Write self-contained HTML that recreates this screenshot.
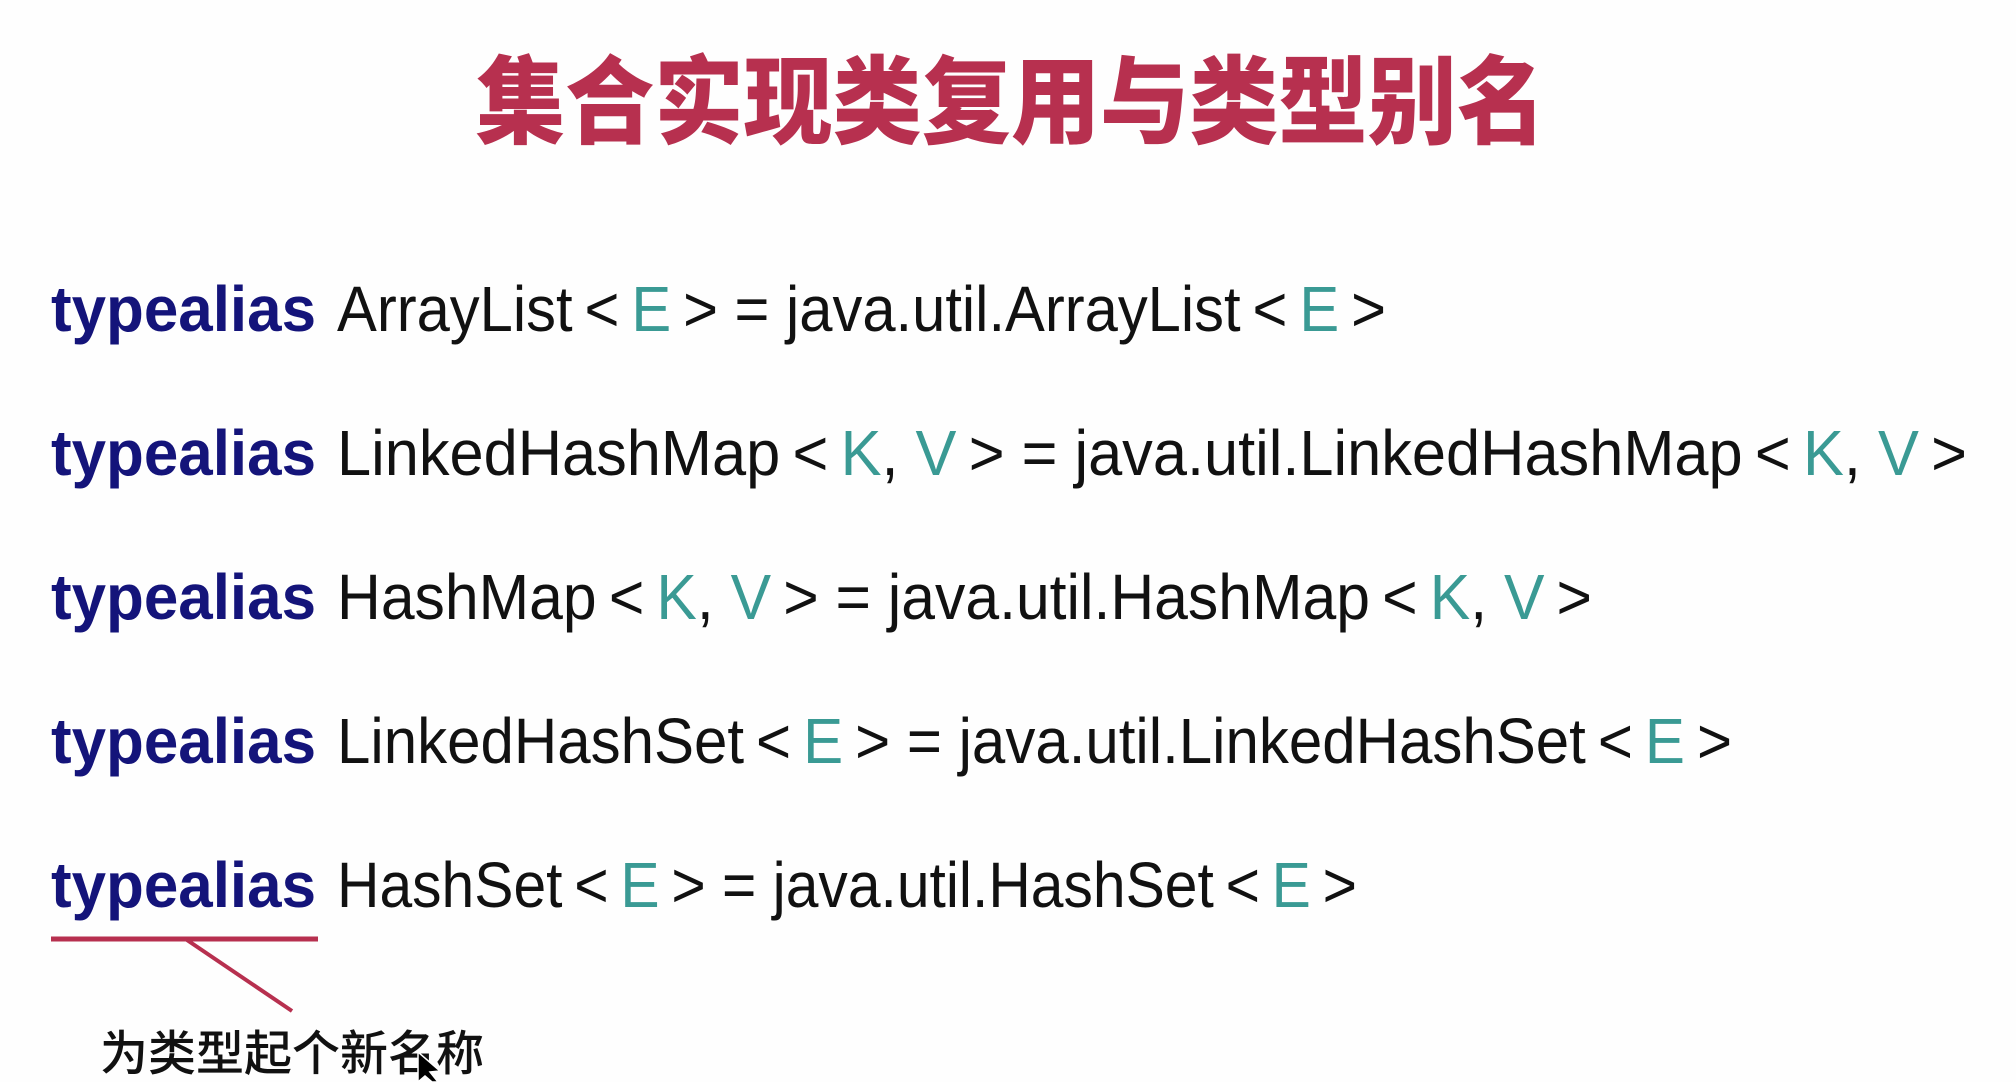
<!DOCTYPE html>
<html><head><meta charset="utf-8"><style>
html,body{margin:0;padding:0;background:#fff;}
svg{display:block}
</style></head><body>
<svg width="2016" height="1082" viewBox="0 0 2016 1082" xmlns="http://www.w3.org/2000/svg">
<rect width="2016" height="1082" fill="#fefefe"/>
<text x="476" y="136" textLength="1070" lengthAdjust="spacingAndGlyphs" font-family="'Noto Sans CJK SC', sans-serif" font-weight="900" font-size="96" fill="#b7304f">集合实现类复用与类型别名</text>
<g font-family="'Liberation Sans', sans-serif" font-size="64">
<g font-weight="bold" fill="#14147a">
<text x="51" y="331" textLength="265" lengthAdjust="spacingAndGlyphs">typealias</text>
<text x="51" y="475" textLength="265" lengthAdjust="spacingAndGlyphs">typealias</text>
<text x="51" y="619" textLength="265" lengthAdjust="spacingAndGlyphs">typealias</text>
<text x="51" y="763" textLength="265" lengthAdjust="spacingAndGlyphs">typealias</text>
<text x="51" y="907" textLength="265" lengthAdjust="spacingAndGlyphs">typealias</text>
</g>
<g fill="#111">
<text x="337" y="331" textLength="1049" lengthAdjust="spacingAndGlyphs">ArrayList&#8201;&lt;&#8201;<tspan fill="#3a9a94">E</tspan>&#8201;&gt; = java.util.ArrayList&#8201;&lt;&#8201;<tspan fill="#3a9a94">E</tspan>&#8201;&gt;</text>
<text x="337" y="475" textLength="1630" lengthAdjust="spacingAndGlyphs">LinkedHashMap&#8201;&lt;&#8201;<tspan fill="#3a9a94">K</tspan>, <tspan fill="#3a9a94">V</tspan>&#8201;&gt; = java.util.LinkedHashMap&#8201;&lt;&#8201;<tspan fill="#3a9a94">K</tspan>, <tspan fill="#3a9a94">V</tspan>&#8201;&gt;</text>
<text x="337" y="619" textLength="1255" lengthAdjust="spacingAndGlyphs">HashMap&#8201;&lt;&#8201;<tspan fill="#3a9a94">K</tspan>, <tspan fill="#3a9a94">V</tspan>&#8201;&gt; = java.util.HashMap&#8201;&lt;&#8201;<tspan fill="#3a9a94">K</tspan>, <tspan fill="#3a9a94">V</tspan>&#8201;&gt;</text>
<text x="337" y="763" textLength="1395" lengthAdjust="spacingAndGlyphs">LinkedHashSet&#8201;&lt;&#8201;<tspan fill="#3a9a94">E</tspan>&#8201;&gt; = java.util.LinkedHashSet&#8201;&lt;&#8201;<tspan fill="#3a9a94">E</tspan>&#8201;&gt;</text>
<text x="337" y="907" textLength="1020" lengthAdjust="spacingAndGlyphs">HashSet&#8201;&lt;&#8201;<tspan fill="#3a9a94">E</tspan>&#8201;&gt; = java.util.HashSet&#8201;&lt;&#8201;<tspan fill="#3a9a94">E</tspan>&#8201;&gt;</text>
</g>
</g>
<line x1="51" y1="939" x2="318" y2="939" stroke="#b7304f" stroke-width="5"/>
<line x1="187" y1="940" x2="292" y2="1011" stroke="#b7304f" stroke-width="4"/>
<text x="100" y="1070" textLength="384" lengthAdjust="spacingAndGlyphs" font-family="'Noto Sans CJK SC', sans-serif" font-weight="500" font-size="48" fill="#111">为类型起个新名称</text>
<polygon points="418,1052 418,1082 425,1076 432,1082 438,1082 430,1072 440,1071" fill="#000" stroke="#fff" stroke-width="1.5"/>
</svg>
</body></html>
